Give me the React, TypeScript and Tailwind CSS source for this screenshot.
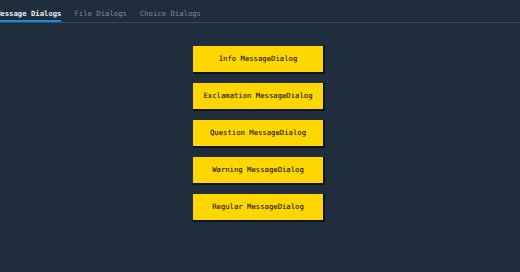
import React, { useState } from "react";

const tabs = ["Message Dialogs", "File Dialogs", "Choice Dialogs"];

const buttons = [
  "Info MessageDialog",
  "Exclamation MessageDialog",
  "Question MessageDialog",
  "Warning MessageDialog",
  "Regular MessageDialog",
];

export default function App() {
  const [active, setActive] = useState(0);

  return (
    <div className="w-[520px] h-[272px] overflow-hidden bg-[#1f2d3d] font-['DejaVu_Sans_Mono',monospace]">
      <div className="w-[524px] -ml-[4px]">
        {/* tab bar */}
        <div className="flex border-b border-[#3a4858]">
          {tabs.map((t, i) => (
            <button
              key={t}
              onClick={() => setActive(i)}
              className={
                "h-[22px] mr-[13px] pt-[7px] text-[7.25px] leading-none whitespace-nowrap border-b-2 " +
                (i === active
                  ? "border-[#1e88e5] text-[#e8edf2] font-bold"
                  : "border-transparent text-[#7f8c99]")
              }
            >
              {t}
            </button>
          ))}
        </div>

        {/* dialog buttons */}
        <div className="flex flex-col items-center gap-[11px] mt-[23px]">
          {buttons.map((b) => (
            <button
              key={b}
              className="w-[130px] h-[26px] bg-[#ffd700] text-[#141408] text-[7.25px] [-webkit-text-stroke:0.1px_#141408] shadow-[1px_1px_0_1px_#0d141c]"
            >
              {b}
            </button>
          ))}
        </div>
      </div>
    </div>
  );
}
